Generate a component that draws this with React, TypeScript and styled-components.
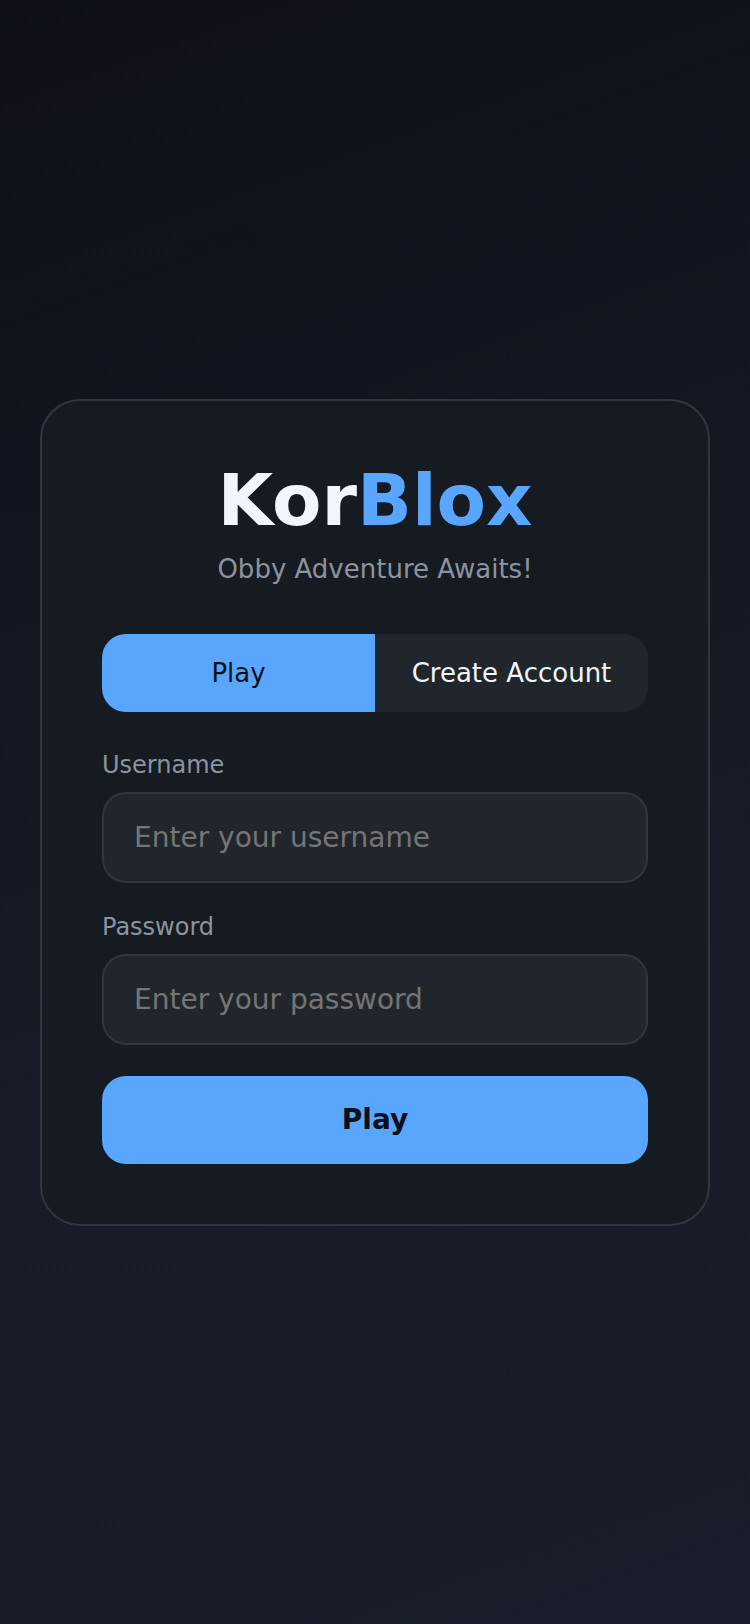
import React from 'react';
import styled, { createGlobalStyle } from 'styled-components';

const GlobalStyle = createGlobalStyle`
    * {
        box-sizing: border-box;
    }
    html, body {
        margin: 0;
        padding: 0;
    }
    body {
        font-family: "DejaVu Sans", Verdana, sans-serif;
        background: linear-gradient(160deg, #0d1117 0%, #151a23 50%, #1a1e2c 100%);
        min-height: 100vh;
    }
`;

const Page = styled.div`
    min-height: 100vh;
    display: flex;
    align-items: center;
    justify-content: center;
    padding: 0 40px;
`;

const Card = styled.div`
    width: 100%;
    background: #161b22;
    border: 2px solid #30363d;
    border-radius: 40px;
    padding: 60px;
    display: flex;
    flex-direction: column;
`;

const Title = styled.h1`
    margin: 0;
    font-size: 72px;
    line-height: 78px;
    font-weight: 700;
    text-align: center;
    color: #f0f6fc;
`;

const Accent = styled.span`
    color: #58a6ff;
`;

const Subtitle = styled.p`
    margin: 15px 0 0;
    font-size: 26px;
    line-height: 30px;
    text-align: center;
    color: #8b949e;
`;

const Tabs = styled.div`
    display: flex;
    margin: 50px 0 39px;
    height: 78px;
    border-radius: 24px;
    overflow: hidden;
    background: #21262d;
`;

const Tab = styled.button<{ $active?: boolean }>`
    flex: 1;
    border: none;
    margin: 0;
    padding: 0;
    font-family: inherit;
    font-size: 26px;
    cursor: pointer;
    background: ${(p) => (p.$active ? '#58a6ff' : 'transparent')};
    color: ${(p) => (p.$active ? '#0d1117' : '#f0f6fc')};
`;

const Form = styled.form`
    display: flex;
    flex-direction: column;
    gap: 30px;
`;

const Field = styled.div`
    display: flex;
    flex-direction: column;
`;

const Label = styled.label`
    font-size: 24px;
    line-height: 29px;
    color: #8b949e;
    margin-bottom: 12px;
`;

const Input = styled.input`
    width: 100%;
    height: 91px;
    padding: 0 30px;
    border: 2px solid #30363d;
    border-radius: 24px;
    background: #21262d;
    color: #f0f6fc;
    font-family: inherit;
    font-size: 28px;
    outline: none;

    &::placeholder {
        color: #757575;
    }
`;

const Submit = styled.button`
    margin-top: 1px;
    height: 88px;
    border: none;
    border-radius: 24px;
    background: #58a6ff;
    color: #0d1117;
    font-family: inherit;
    font-size: 28px;
    font-weight: 700;
    cursor: pointer;
`;

function App() {
    const [mode, setMode] = React.useState<'play' | 'create'>('play');

    return (
        <>
            <GlobalStyle />
            <Page>
                <Card>
                    <Title>
                        Kor<Accent>Blox</Accent>
                    </Title>
                    <Subtitle>Obby Adventure Awaits!</Subtitle>
                    <Tabs>
                        <Tab $active={mode === 'play'} onClick={() => setMode('play')}>
                            Play
                        </Tab>
                        <Tab $active={mode === 'create'} onClick={() => setMode('create')}>
                            Create Account
                        </Tab>
                    </Tabs>
                    <Form onSubmit={(e) => e.preventDefault()}>
                        <Field>
                            <Label htmlFor="username">Username</Label>
                            <Input id="username" type="text" placeholder="Enter your username" />
                        </Field>
                        <Field>
                            <Label htmlFor="password">Password</Label>
                            <Input id="password" type="password" placeholder="Enter your password" />
                        </Field>
                        <Submit type="submit">{mode === 'play' ? 'Play' : 'Create Account'}</Submit>
                    </Form>
                </Card>
            </Page>
        </>
    );
}

export default App;
